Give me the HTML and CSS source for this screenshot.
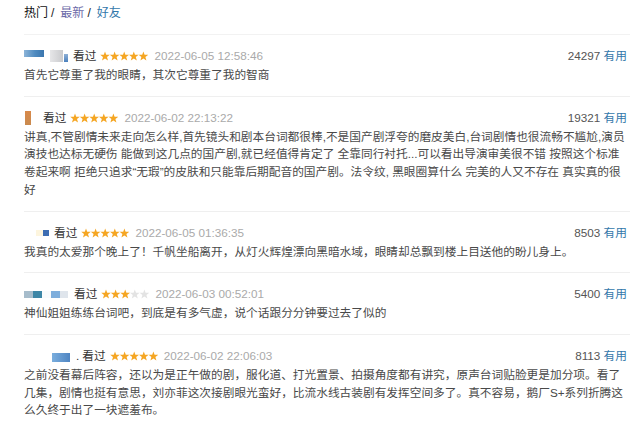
FILE: index.html
```html
<!DOCTYPE html>
<html lang="zh-CN">
<head>
<meta charset="utf-8">
<title>短评</title>
<link rel="stylesheet" href="styles.css">
</head>
<body>
<svg width="0" height="0" class="defs">
  <defs>
    <polygon id="star" points="5,0.4 6.2,3.7 9.8,3.8 7,6 8,9.6 5,7.5 2,9.6 3,6 0.2,3.8 3.8,3.7"/>
  </defs>
</svg>
<div class="page">
  <div class="tabs">
    <span class="tab-cur">热门</span><span class="tab-sep">/</span><a class="tab tab-visited">最新</a><span class="tab-sep">/</span><a class="tab">好友</a>
  </div>

  <div class="list">
    <div class="item">
      <div class="meta">
        <span class="user">
          <i class="blk b1a"></i><i class="blk b1b"></i><i class="blk b1c"></i>
        </span>
        <span class="status">看过</span>
        <svg class="stars" width="48" height="10" viewBox="0 0 48 10"><use href="#star" x="0" class="on"/><use href="#star" x="9.6" class="on"/><use href="#star" x="19.2" class="on"/><use href="#star" x="28.8" class="on"/><use href="#star" x="38.4" class="on"/></svg>
        <span class="time">2022-06-05 12:58:46</span>
        <span class="votes"><span class="num">24297</span> <a class="useful">有用</a></span>
      </div>
      <p class="text">首先它尊重了我的眼睛，其次它尊重了我的智商</p>
    </div>

    <div class="item">
      <div class="meta">
        <span class="user">
          <i class="blk b2a"></i>
        </span>
        <span class="status">看过</span>
        <svg class="stars" width="48" height="10" viewBox="0 0 48 10"><use href="#star" x="0" class="on"/><use href="#star" x="9.6" class="on"/><use href="#star" x="19.2" class="on"/><use href="#star" x="28.8" class="on"/><use href="#star" x="38.4" class="on"/></svg>
        <span class="time">2022-06-02 22:13:22</span>
        <span class="votes"><span class="num">19321</span> <a class="useful">有用</a></span>
      </div>
      <p class="text">讲真,不管剧情未来走向怎么样,首先镜头和剧本台词都很棒,不是国产剧浮夸的磨皮美白,台词剧情也很流畅不尴尬,演员演技也达标无硬伤 能做到这几点的国产剧,就已经值得肯定了 全靠同行衬托...可以看出导演审美很不错 按照这个标准卷起来啊 拒绝只追求“无瑕”的皮肤和只能靠后期配音的国产剧。法令纹, 黑眼圈算什么 完美的人又不存在 真实真的很好</p>
    </div>

    <div class="item">
      <div class="meta">
        <span class="user">
          <i class="blk b3a"></i><i class="blk b3b"></i>
        </span>
        <span class="status">看过</span>
        <svg class="stars" width="48" height="10" viewBox="0 0 48 10"><use href="#star" x="0" class="on"/><use href="#star" x="9.6" class="on"/><use href="#star" x="19.2" class="on"/><use href="#star" x="28.8" class="on"/><use href="#star" x="38.4" class="on"/></svg>
        <span class="time">2022-06-05 01:36:35</span>
        <span class="votes"><span class="num">8503</span> <a class="useful">有用</a></span>
      </div>
      <p class="text">我真的太爱那个晚上了！千帆坐船离开，从灯火辉煌漂向黑暗水域，眼睛却总飘到楼上目送他的盼儿身上。</p>
    </div>

    <div class="item">
      <div class="meta">
        <span class="user">
          <i class="blk b4a"></i><i class="blk b4b"></i><i class="blk b4c"></i><i class="blk b4d"></i><i class="blk b4e"></i>
        </span>
        <span class="status">看过</span>
        <svg class="stars" width="48" height="10" viewBox="0 0 48 10"><use href="#star" x="0" class="on"/><use href="#star" x="9.6" class="on"/><use href="#star" x="19.2" class="on"/><use href="#star" x="28.8" class="off"/><use href="#star" x="38.4" class="off"/></svg>
        <span class="time">2022-06-03 00:52:01</span>
        <span class="votes"><span class="num">5400</span> <a class="useful">有用</a></span>
      </div>
      <p class="text">神仙姐姐练练台词吧，到底是有多气虚，说个话跟分分钟要过去了似的</p>
    </div>

    <div class="item">
      <div class="meta">
        <span class="user">
          <i class="blk b5a"></i><span class="dot">.</span>
        </span>
        <span class="status">看过</span>
        <svg class="stars" width="48" height="10" viewBox="0 0 48 10"><use href="#star" x="0" class="on"/><use href="#star" x="9.6" class="on"/><use href="#star" x="19.2" class="on"/><use href="#star" x="28.8" class="on"/><use href="#star" x="38.4" class="on"/></svg>
        <span class="time">2022-06-02 22:06:03</span>
        <span class="votes"><span class="num">8113</span> <a class="useful">有用</a></span>
      </div>
      <p class="text">之前没看幕后阵容，还以为是正午做的剧，服化道、打光置景、拍摄角度都有讲究，原声台词贴脸更是加分项。看了几集，剧情也挺有意思，刘亦菲这次接剧眼光蛮好，比流水线古装剧有发挥空间多了。真不容易，鹅厂S+系列折腾这么久终于出了一块遮羞布。</p>
    </div>
  </div>
</div>
</body>
</html>
```

FILE: styles.css
```css
html, body {
  margin: 0;
  padding: 0;
  background: #ffffff;
}

body {
  font-family: "Liberation Sans", "Noto Sans CJK SC", sans-serif;
  font-size: 11.7px;
  color: #494949;
  overflow: hidden;
}

.defs {
  position: absolute;
  width: 0;
  height: 0;
}

.page {
  padding-left: 24px;
  width: 606px;
}

.tabs {
  padding-top: 4px;
  padding-bottom: 12px;
  line-height: 18px;
  font-size: 12px;
  border-bottom: 1px solid #f2f2f2;
}

.tab-cur {
  color: #111;
}

.tab-sep {
  color: #222;
  margin: 0 6px 0 3px;
}

.tab {
  color: #3377aa;
  text-decoration: none;
}

.tab-visited {
  color: #6b6aa8;
}

.item {
  padding: 12px 0 12px;
  border-bottom: 1px solid #efefef;
}

.meta {
  display: flex;
  align-items: center;
  height: 18px;
  line-height: 18px;
  padding-right: 3px;
}

.user {
  display: inline-flex;
  align-items: center;
}

.blk {
  display: inline-block;
}

.b1a {
  width: 20px;
  height: 7px;
  margin-top: -5px;
  background: linear-gradient(90deg, #8cb4d8 0%, #4f8bc0 55%, #3a76ae 100%);
}

.b1b {
  width: 13px;
  height: 12px;
  margin-left: 6px;
  background: linear-gradient(90deg, #e6e6e8, #c9cacd);
}

.b1c {
  width: 4px;
  height: 8px;
  margin-top: 3px;
  margin-left: 1px;
  background: linear-gradient(180deg, #8fb0d6, #4a80bd);
}

.b2a {
  width: 6px;
  height: 14px;
  margin-left: 1px;
  background: linear-gradient(180deg, #d8894a, #c98a4e);
}

.b3a {
  width: 7px;
  height: 6px;
  margin-left: 12px;
  background: #fdf5de;
}

.b3b {
  width: 6px;
  height: 6px;
  background: #3d6db2;
}

.b4a {
  width: 9px;
  height: 7px;
  background: #a6bccb;
}

.b4b {
  width: 9px;
  height: 7px;
  background: #3d86a6;
}

.b4c {
  width: 9px;
  height: 7px;
  background: #fafbfc;
}

.b4d {
  width: 9px;
  height: 7px;
  background: #7eaedc;
}

.b4e {
  width: 8px;
  height: 7px;
  background: #dfe5ec;
}

.b5a {
  width: 18px;
  height: 9px;
  margin-left: 28px;
  margin-top: 3px;
  background: linear-gradient(90deg, #7aaede, #4f85c2);
}

.dot {
  color: #333;
  margin-left: 6px;
}

.status {
  color: #333;
  margin-left: 5px;
}

.item:nth-child(2) .status {
  margin-left: 12px;
}

.item:nth-child(4) .status {
  margin-left: 6px;
}

.item:nth-child(5) .status {
  margin-left: 3px;
}

.stars {
  display: block;
  margin-left: 4px;
  flex: none;
}

.stars .on {
  fill: #f5a623;
}

.stars .off {
  fill: #e3e3e3;
}

.time {
  color: #aaaaaa;
  margin-left: 6px;
}

.votes {
  margin-left: auto;
  color: #555;
}

.useful {
  color: #3377aa;
  text-decoration: none;
}

.text {
  margin: 1px 0 0;
  padding-right: 3px;
  line-height: 17.7px;
  color: #494949;
}
```
